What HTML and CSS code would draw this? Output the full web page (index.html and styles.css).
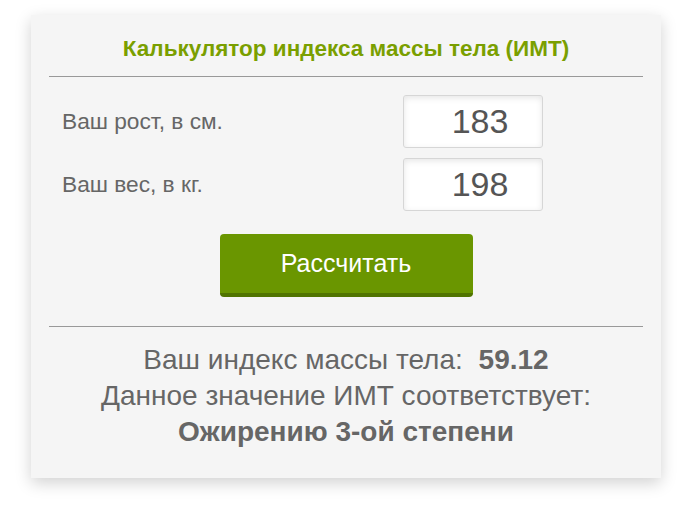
FILE: index.html
```html
<!DOCTYPE html>
<html lang="ru">
<head>
  <meta charset="UTF-8">
  <title>Калькулятор ИМТ</title>
  <link rel="stylesheet" href="styles.css">
</head>
<body>
  <div class="calc">
    <h1>Калькулятор индекса массы тела (ИМТ)</h1>

    <div class="fields">
      <div class="row">
        <label for="rost">Ваш рост, в см.</label>
        <input id="rost" type="text" value="183">
      </div>
      <div class="row">
        <label for="ves">Ваш вес, в кг.</label>
        <input id="ves" type="text" value="198">
      </div>
      <button class="btn">Рассчитать</button>
    </div>

    <div class="result">
      <p>Ваш индекс массы тела: <strong>59.12</strong></p>
      <p>Данное значение ИМТ соответствует:</p>
      <p><strong>Ожирению 3-ой степени</strong></p>
    </div>
  </div>
</body>
</html>
```

FILE: styles.css
```css
body {
  margin: 0;
  background: #fff;
  font-family: "Liberation Sans", Arial, sans-serif;
  color: #666;
  padding: 15px 20px 33px 31px;
}

.calc {
  width: 630px;
  height: 463px;
  box-sizing: border-box;
  background: #f5f5f5;
  padding: 0 18px;
  box-shadow: 0 5px 15px rgba(0,0,0,0.18);
}

h1 {
  margin: 0;
  padding: 21px 0 15px;
  text-align: center;
  font-size: 22.5px;
  line-height: 25px;
  font-weight: bold;
  color: #7a9f00;
  border-bottom: 1px solid #999;
}

.fields {
  padding: 18px 0 29px;
  border-bottom: 1px solid #999;
  display: flex;
  flex-direction: column;
}

.row {
  display: flex;
  align-items: center;
  justify-content: space-between;
  padding-left: 13px;
  padding-right: 100px;
  margin-bottom: 10px;
}

.row label {
  font-size: 22.7px;
  color: #666;
}

.row input {
  width: 140px;
  height: 53px;
  box-sizing: border-box;
  border: 1px solid #d6d6d6;
  border-radius: 3px;
  background: #fff;
  box-shadow: inset 0 2px 6px rgba(0,0,0,0.1);
  font-family: "Liberation Sans", Arial, sans-serif;
  font-size: 34px;
  color: #555;
  text-align: center;
  padding: 0 0 0 14px;
}

.btn {
  align-self: center;
  margin-top: 13px;
  width: 253px;
  height: 63px;
  border: none;
  border-bottom: 4px solid #507400;
  border-radius: 4px;
  background: #6a9600;
  color: #fff;
  font-family: "Liberation Sans", Arial, sans-serif;
  font-size: 25px;
  cursor: pointer;
}

.result {
  text-align: center;
  padding-top: 17px;
  font-size: 28px;
  color: #666;
}

.result p {
  margin: 0 0 4px;
  line-height: 32px;
}

.result strong {
  margin-left: 8px;
}

.result p:last-child strong {
  margin-left: 0;
}
```
